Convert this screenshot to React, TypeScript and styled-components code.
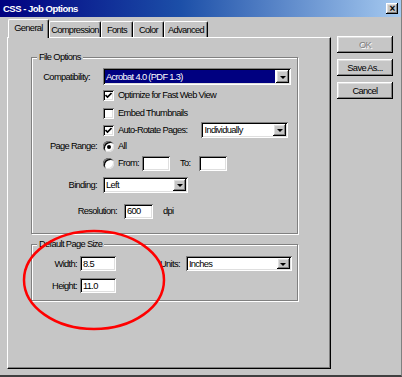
import React from 'react';
import styled, { createGlobalStyle } from 'styled-components';

const GlobalStyle = createGlobalStyle`
    body {
        margin: 0;
        background: #c6c6c6;
        font-family: "Liberation Sans", Arial, sans-serif;
        font-size: 9.3px;
        letter-spacing: -0.65px;
        color: #000;
    }
`;

const raised = `
    box-shadow: inset -1px -1px #000, inset 1px 1px #fff, inset -2px -2px #808080, inset 2px 2px #dfdfdf;
`;

const sunken = `
    box-shadow: inset 1px 1px #808080, inset -1px -1px #fff, inset 2px 2px #000, inset -2px -2px #dfdfdf;
`;

const Window = styled.div`
    position: relative;
    width: 402px;
    height: 377px;
    box-sizing: border-box;
    background: #c6c6c6;
    border-right: 1px solid #808080;
    border-bottom: 2px solid #404040;
    overflow: hidden;
`;

const TitleBar = styled.div`
    height: 17px;
    display: flex;
    align-items: center;
    justify-content: space-between;
    padding: 0 3px 0 3px;
    background: linear-gradient(to right, #000080 0%, #1c4fa8 45%, #a6caf0 100%);
`;

const Title = styled.span`
    color: #fff;
    font-weight: bold;
    font-size: 9.5px;
    letter-spacing: -0.5px;
`;

const CloseBtn = styled.div`
    width: 12px;
    height: 11px;
    background: #c6c6c6;
    ${raised}
    display: flex;
    align-items: center;
    justify-content: center;
    font-size: 10px;
    font-weight: bold;
    line-height: 1;
`;

const Body = styled.div`
    display: flex;
`;

const TabArea = styled.div`
    margin-left: 7px;
    width: 324px;
`;

const TabStrip = styled.div`
    display: flex;
    align-items: flex-end;
    height: 20px;
    padding-left: 1px;
`;

const Tab = styled.div<{ $w: number; $active?: boolean }>`
    position: relative;
    z-index: ${p => (p.$active ? 2 : 1)};
    width: ${p => p.$w}px;
    height: ${p => (p.$active ? 19 : 16)}px;
    margin-bottom: ${p => (p.$active ? -1 : 0)}px;
    box-sizing: border-box;
    background: #c6c6c6;
    border-top: 1px solid #fff;
    border-left: 1px solid #fff;
    border-right: 1px solid #000;
    box-shadow: inset -1px 0 #808080;
    border-radius: 2px 2px 0 0;
    display: flex;
    align-items: ${p => (p.$active ? 'flex-start' : 'center')};
    padding-top: ${p => (p.$active ? 3 : 0)}px;
    justify-content: center;
    white-space: nowrap;
`;

const Panel = styled.div`
    position: relative;
    height: 332px;
    box-sizing: border-box;
    border-top: 1px solid #fff;
    border-left: 1px solid #fff;
    border-right: 1px solid #000;
    border-bottom: 1px solid #000;
    box-shadow: inset -1px -1px #808080;
    padding: 19px 0 0 23px;
`;

const Group = styled.div<{ $h: number; $mt?: number }>`
    position: relative;
    width: 267px;
    height: ${p => p.$h}px;
    margin-top: ${p => p.$mt || 0}px;
    box-sizing: border-box;
    border: 1px solid #808080;
    box-shadow: inset 1px 1px #fff, 1px 1px #fff;
`;

const Legend = styled.span`
    position: absolute;
    left: 5px;
    top: -7px;
    padding: 0 2px;
    background: #c6c6c6;
    line-height: 12px;
`;

const Row = styled.div<{ $h: number; $mt?: number }>`
    display: flex;
    align-items: center;
    height: ${p => p.$h}px;
    margin-top: ${p => p.$mt || 0}px;
`;

const Label = styled.span<{ $w?: number; $ml?: number }>`
    width: ${p => (p.$w ? `${p.$w}px` : 'auto')};
    margin-left: ${p => p.$ml || 0}px;
    text-align: right;
    flex-shrink: 0;
    white-space: nowrap;
`;

const Text = styled.span<{ $ml?: number }>`
    margin-left: ${p => p.$ml || 0}px;
    white-space: nowrap;
`;

const Field = styled.div<{ $w: number; $h?: number; $ml?: number }>`
    width: ${p => p.$w}px;
    height: ${p => p.$h || 15}px;
    margin-left: ${p => p.$ml || 0}px;
    box-sizing: border-box;
    background: #fff;
    ${sunken}
    padding: 0 3px;
    display: flex;
    align-items: center;
    flex-shrink: 0;
`;

const Select = styled.div<{ $w: number; $h?: number; $ml?: number }>`
    width: ${p => p.$w}px;
    height: ${p => p.$h || 16}px;
    margin-left: ${p => p.$ml || 0}px;
    box-sizing: border-box;
    background: #fff;
    ${sunken}
    padding: 2px;
    display: flex;
    flex-shrink: 0;
`;

const SelValue = styled.div<{ $sel?: boolean }>`
    flex: 1;
    display: flex;
    align-items: center;
    padding-left: 1px;
    background: ${p => (p.$sel ? '#000080' : 'transparent')};
    color: ${p => (p.$sel ? '#fff' : '#000')};
    margin-right: 1px;
    white-space: nowrap;
    overflow: hidden;
`;

const DropBtn = styled.div`
    width: 13px;
    background: #c6c6c6;
    ${raised}
    display: flex;
    align-items: center;
    justify-content: center;
    &::after {
        content: '';
        border-left: 3px solid transparent;
        border-right: 3px solid transparent;
        border-top: 3px solid #000;
        margin-top: 1px;
    }
`;

const Check = styled.span<{ $ml?: number }>`
    width: 11px;
    height: 11px;
    margin-left: ${p => p.$ml || 0}px;
    box-sizing: border-box;
    background: #fff;
    ${sunken}
    display: flex;
    align-items: center;
    justify-content: center;
    flex-shrink: 0;
`;

const Radio = styled.span<{ $ml?: number; $on?: boolean }>`
    position: relative;
    width: 11px;
    height: 11px;
    margin-left: ${p => p.$ml || 0}px;
    border-radius: 50%;
    background: #fff;
    box-shadow: inset 1px 1px #808080, inset -1px -1px #dfdfdf, inset 2px 2px #000;
    flex-shrink: 0;
    &::after {
        content: '';
        display: ${p => (p.$on ? 'block' : 'none')};
        position: absolute;
        left: 4px;
        top: 4px;
        width: 4px;
        height: 4px;
        border-radius: 50%;
        background: #000;
    }
`;

const ButtonCol = styled.div`
    display: flex;
    flex-direction: column;
    gap: 6px;
    margin: 19px 0 0 6px;
`;

const Button = styled.div<{ $disabled?: boolean }>`
    width: 56px;
    height: 17px;
    box-sizing: border-box;
    background: #c6c6c6;
    ${raised}
    display: flex;
    align-items: center;
    justify-content: center;
    color: ${p => (p.$disabled ? '#808080' : '#000')};
    text-shadow: ${p => (p.$disabled ? '1px 1px #fff' : 'none')};
`;

const Annotation = styled.svg`
    position: absolute;
    left: 0;
    top: 0;
    pointer-events: none;
`;

const CheckMark = () => (
    <svg width="7" height="7" viewBox="0 0 7 7">
        <path d="M0.5 3 L2.5 5 L6.5 1" stroke="#000" strokeWidth="1.6" fill="none" />
    </svg>
);

const tabs = [
    { name: 'General', w: 41 },
    { name: 'Compression', w: 52 },
    { name: 'Fonts', w: 32 },
    { name: 'Color', w: 31 },
    { name: 'Advanced', w: 44 },
];

function App() {
    return (
        <>
            <GlobalStyle />
            <Window>
                <TitleBar>
                    <Title>CSS - Job Options</Title>
                    <CloseBtn>×</CloseBtn>
                </TitleBar>
                <Body>
                    <TabArea>
                        <TabStrip>
                            {tabs.map((t, i) => (
                                <Tab key={t.name} $w={t.w} $active={i === 0}>{t.name}</Tab>
                            ))}
                        </TabStrip>
                        <Panel>
                            <Group $h={177}>
                                <Legend>File Options</Legend>
                                <Row $h={17} $mt={10}>
                                    <Label $w={58}>Compatibility:</Label>
                                    <Select $w={188} $h={17} $ml={13}>
                                        <SelValue $sel>Acrobat 4.0 (PDF 1.3)</SelValue>
                                        <DropBtn />
                                    </Select>
                                </Row>
                                <Row $h={18} $mt={1}>
                                    <Check $ml={71}><CheckMark /></Check>
                                    <Text $ml={4}>Optimize for Fast Web View</Text>
                                </Row>
                                <Row $h={18}>
                                    <Check $ml={71} />
                                    <Text $ml={4}>Embed Thumbnails</Text>
                                </Row>
                                <Row $h={16}>
                                    <Check $ml={71}><CheckMark /></Check>
                                    <Text $ml={4}>Auto-Rotate Pages:</Text>
                                    <Select $w={87} $ml={14}>
                                        <SelValue>Individually</SelValue>
                                        <DropBtn />
                                    </Select>
                                </Row>
                                <Row $h={16}>
                                    <Label $w={65}>Page Range:</Label>
                                    <Radio $ml={6} $on />
                                    <Text $ml={4}>All</Text>
                                </Row>
                                <Row $h={16} $mt={1}>
                                    <Radio $ml={71} />
                                    <Text $ml={4}>From:</Text>
                                    <Field $w={28} $ml={3} />
                                    <Text $ml={10}>To:</Text>
                                    <Field $w={28} $ml={9} />
                                </Row>
                                <Row $h={16} $mt={6}>
                                    <Label $w={65}>Binding:</Label>
                                    <Select $w={85} $ml={6}>
                                        <SelValue>Left</SelValue>
                                        <DropBtn />
                                    </Select>
                                </Row>
                                <Row $h={16} $mt={10}>
                                    <Label $w={85}>Resolution:</Label>
                                    <Field $w={29} $ml={7}>600</Field>
                                    <Text $ml={10}>dpi</Text>
                                </Row>
                            </Group>
                            <Group $h={57} $mt={10}>
                                <Legend>Default Page Size</Legend>
                                <Row $h={15} $mt={11}>
                                    <Label $w={45}>Width:</Label>
                                    <Field $w={36} $ml={3}>8.5</Field>
                                    <Text $ml={44}>Units:</Text>
                                    <Select $w={106} $h={15} $ml={6}>
                                        <SelValue>Inches</SelValue>
                                        <DropBtn />
                                    </Select>
                                </Row>
                                <Row $h={15} $mt={7}>
                                    <Label $w={45}>Height:</Label>
                                    <Field $w={36} $ml={3}>11.0</Field>
                                </Row>
                            </Group>
                        </Panel>
                    </TabArea>
                    <ButtonCol>
                        <Button $disabled>OK</Button>
                        <Button>Save As...</Button>
                        <Button>Cancel</Button>
                    </ButtonCol>
                </Body>
                <Annotation width="402" height="377">
                    <ellipse cx="94" cy="280" rx="70" ry="49" fill="none" stroke="#f00" strokeWidth="2.5" />
                </Annotation>
            </Window>
        </>
    );
}

export default App;
